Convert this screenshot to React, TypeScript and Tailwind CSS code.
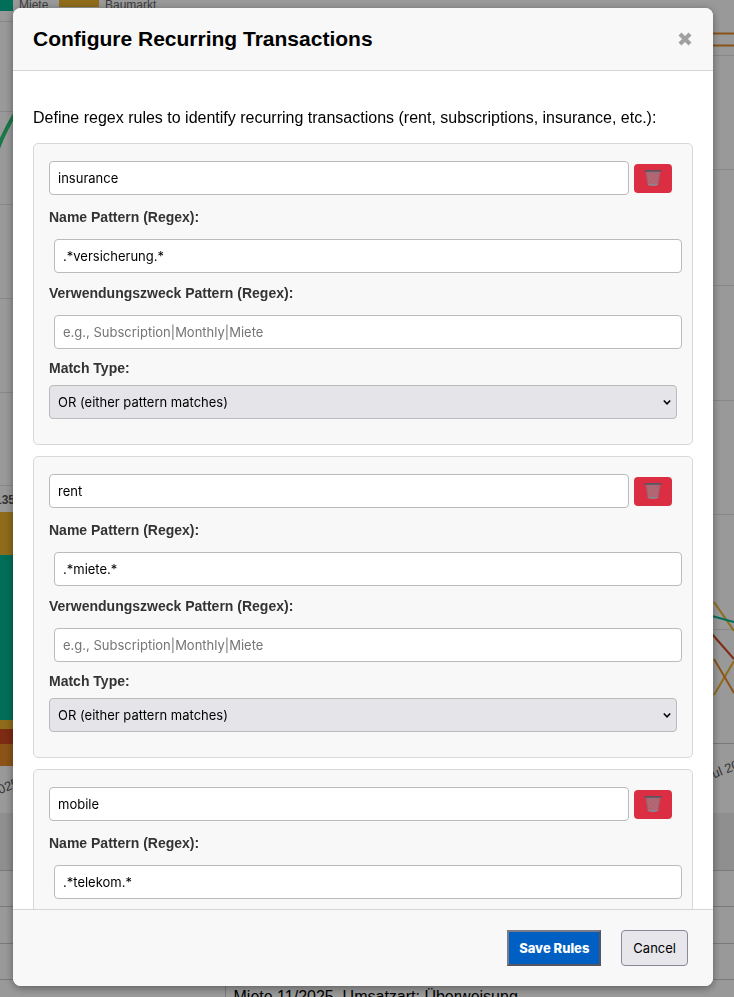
import { useState } from 'react'
import { clsx } from 'clsx'

type Rule = {
  id: number
  name: string
  namePattern: string
  purposePattern: string
  matchType: 'or' | 'and'
}

const initialRules: Rule[] = [
  { id: 1, name: 'insurance', namePattern: '.*versicherung.*', purposePattern: '', matchType: 'or' },
  { id: 2, name: 'rent', namePattern: '.*miete.*', purposePattern: '', matchType: 'or' },
  { id: 3, name: 'mobile', namePattern: '.*telekom.*', purposePattern: '', matchType: 'or' },
]

const fieldClass =
  'h-[34px] rounded border border-[#bbb] px-2 font-["Inter",sans-serif] text-[13px] text-black outline-none placeholder:text-[#757575]'

const labelClass = 'block text-[14px] leading-5 font-bold text-[#333]'

const TrashIcon = () => (
  <svg className="h-[18px] w-[18px]" viewBox="0 0 18 18" fill="none" aria-hidden="true">
    <path d="M1.6 2.2 3.8 15.4Q9 17.4 14.2 15.4L16.4 2.2Z" fill="#b8606c" />
    <path
      d="M3 5 12 15.8M5.5 3.5 14 13M9.5 3.5 14.8 9.5M3.5 9.5 9 16M15 5 6 15.8M12.5 3.5 4 13M8.5 3.5 3.2 9.5M14.5 9.5 9 16"
      stroke="#a3747e"
      strokeWidth="0.7"
    />
    <path d="M1.8 2.4 4 15.2M16.2 2.4 14 15.2" stroke="#96606d" strokeWidth="1" />
    <path d="M4 15.3Q9 17 14 15.3" stroke="#8d8490" strokeWidth="1.6" />
    <path d="M1.2 1.9H16.8" stroke="#5d5260" strokeWidth="1.8" strokeLinecap="round" />
    <path d="M2.5 3.3H15.5" stroke="#8b7480" strokeWidth="0.8" />
  </svg>
)

const CloseIcon = () => (
  <svg className="h-4 w-4" viewBox="0 0 16 16" fill="none" aria-hidden="true">
    <path d="M3 3 13 13M13 3 3 13" stroke="currentColor" strokeWidth="4.2" />
  </svg>
)

// Overview chart and booking table that sit behind the dialog
const Dashboard = () => (
  <div className="h-screen overflow-hidden bg-white">
    <div className="flex justify-between">
      <svg className="h-[813px] w-[240px]" fontFamily="Liberation Sans, sans-serif" aria-hidden="true">
        <path d="M0 21.5H240M0 111.5H240M0 204.5H240M0 298.5H240M0 392.5H240M0 485.5H240" stroke="#e3e3e3" />
        <rect width="13" height="11" fill="#00b894" />
        <rect x="59" width="40" height="7" fill="#edb42e" />
        <text x="19" y="9" fontSize="12" fill="#666">Miete</text>
        <text x="105" y="9" fontSize="12" fill="#666">Baumarkt</text>
        <path d="M-2 148Q5 130 16 112" stroke="#2bc778" strokeWidth="4" fill="none" />
        <text x="-5" y="504" fontSize="12" fontWeight="bold" fill="#555">135</text>
        <rect y="512" width="20" height="43" fill="#edb42e" />
        <rect y="555" width="20" height="165" fill="#00b894" />
        <rect y="720" width="20" height="9" fill="#edb42e" />
        <rect y="729" width="20" height="15" fill="#d04820" />
        <rect y="744" width="20" height="22" fill="#e98b28" />
        <text x="-7" y="797" fontSize="13" fill="#555" transform="rotate(-22 -7 797)">2025</text>
      </svg>
      <svg className="h-[813px] w-[60px]" fontFamily="Liberation Sans, sans-serif" aria-hidden="true">
        <path d="M0 55.5H60M0 169.5H60M0 285.5H60M0 400.5H60M0 514.5H60M0 629.5H60" stroke="#e3e3e3" />
        <path d="M0 743.5H60" stroke="#c8c8c8" />
        <path d="M0 33.5H60M0 45.5H60" stroke="#e98b28" strokeWidth="2" />
        <g strokeWidth="2" fill="none">
          <path d="M40 602 60 631M40 695 60 661" stroke="#edb42e" />
          <path d="M38 616 60 622" stroke="#00b894" />
          <path d="M38 634 60 659" stroke="#d04820" />
          <path d="M40 659 60 693" stroke="#e98b28" />
        </g>
        <text x="34" y="781" fontSize="13" fill="#555" transform="rotate(-22 34 781)">Jul 2025</text>
      </svg>
    </div>
    <table className="w-full table-fixed border-collapse text-base text-black">
      <thead>
        <tr className="h-[57px] border-b border-[#ccc] bg-[#eee]">
          <th className="w-[225px]" />
          <th />
        </tr>
      </thead>
      <tbody>
        <tr className="h-9 border-b border-[#ccc]"><td colSpan={2} /></tr>
        <tr className="h-[37px] border-b border-[#ccc]"><td colSpan={2} /></tr>
        <tr className="h-9 border-b border-[#ccc]"><td colSpan={2} /></tr>
        <tr className="h-9">
          <td />
          <td className="border-l border-[#ccc] px-2">Miete 11/2025, Umsatzart: Überweisung</td>
        </tr>
      </tbody>
    </table>
  </div>
)

type RuleCardProps = {
  rule: Rule
  onChange: (patch: Partial<Rule>) => void
  onRemove: () => void
}

const RuleCard = ({ rule, onChange, onRemove }: RuleCardProps) => (
  <div className="rounded-[5px] border border-[#d8d8d8] bg-[#f8f8f8] px-[15px] pt-[17px] pb-[25px]">
    <div className="flex items-center gap-[5px] pr-[5px]">
      <input
        type="text"
        aria-label="Rule name"
        className={clsx(fieldClass, 'min-w-0 flex-1 bg-white')}
        value={rule.name}
        onChange={(e) => onChange({ name: e.target.value })}
      />
      <button
        type="button"
        aria-label="Delete rule"
        className="flex h-[29px] w-[38px] items-center justify-center rounded bg-[#dc2e42]"
        onClick={onRemove}
      >
        <TrashIcon />
      </button>
    </div>

    <label htmlFor={`name-${rule.id}`} className={clsx(labelClass, 'mt-3')}>
      Name Pattern (Regex):
    </label>
    <div className="mt-3 -mr-[5px] pl-[5px]">
      <input
        id={`name-${rule.id}`}
        type="text"
        className={clsx(fieldClass, 'block w-full bg-white')}
        value={rule.namePattern}
        onChange={(e) => onChange({ namePattern: e.target.value })}
      />
    </div>

    <label htmlFor={`purpose-${rule.id}`} className={clsx(labelClass, 'mt-[10px]')}>
      Verwendungszweck Pattern (Regex):
    </label>
    <div className="mt-3 -mr-[5px] pl-[5px]">
      <input
        id={`purpose-${rule.id}`}
        type="text"
        placeholder="e.g., Subscription|Monthly|Miete"
        className={clsx(fieldClass, 'block w-full bg-white')}
        value={rule.purposePattern}
        onChange={(e) => onChange({ purposePattern: e.target.value })}
      />
    </div>

    <label htmlFor={`match-${rule.id}`} className={clsx(labelClass, 'mt-[9px]')}>
      Match Type:
    </label>
    <div className="mt-[7px] grid">
      <select
        id={`match-${rule.id}`}
        className={clsx(fieldClass, 'col-start-1 row-start-1 w-full appearance-none bg-[#e5e4e9] pt-[2px]')}
        value={rule.matchType}
        onChange={(e) => onChange({ matchType: e.target.value as Rule['matchType'] })}
      >
        <option value="or">OR (either pattern matches)</option>
        <option value="and">AND (both patterns match)</option>
      </select>
      <svg
        className="pointer-events-none col-start-1 row-start-1 mr-[6px] h-2 w-2 self-center justify-self-end"
        viewBox="0 0 8 8"
        fill="none"
        aria-hidden="true"
      >
        <path d="M0.8 2.4 4 5.8 7.2 2.4" stroke="#000" strokeWidth="1.5" />
      </svg>
    </div>
  </div>
)

export default function App() {
  const [rules, setRules] = useState(initialRules)

  const updateRule = (id: number, patch: Partial<Rule>) =>
    setRules((prev) => prev.map((rule) => (rule.id === id ? { ...rule, ...patch } : rule)))

  return (
    <div className='font-["Liberation_Sans",Arial,sans-serif]'>
      <Dashboard />
      <div className="fixed inset-0 flex justify-center bg-black/40 pt-2 pr-[21px] pb-[11px] pl-[13px]">
        <div
          role="dialog"
          aria-labelledby="dialog-title"
          className="flex w-full max-w-[700px] flex-col overflow-hidden rounded-lg bg-white shadow-[0_2px_8px_rgba(0,0,0,0.4)]"
        >
          <header className="flex items-center justify-between border-b border-[#d5d5d5] bg-[#f8f8f8] px-5 py-4">
            <h2 id="dialog-title" className="text-[21px] leading-[30px] font-bold text-black">
              Configure Recurring Transactions
            </h2>
            <button type="button" aria-label="Close" className="text-[#a0a0a0]">
              <CloseIcon />
            </button>
          </header>

          <div className="min-h-0 flex-1 overflow-y-auto px-5 pt-9 pb-5 [scrollbar-width:none]">
            <p className="text-base leading-[22px] text-black">
              Define regex rules to identify recurring transactions (rent, subscriptions, insurance, etc.):
            </p>
            <div className="mt-[14px] flex flex-col gap-[11px]">
              {rules.map((rule) => (
                <RuleCard
                  key={rule.id}
                  rule={rule}
                  onChange={(patch) => updateRule(rule.id, patch)}
                  onRemove={() => setRules((prev) => prev.filter((r) => r.id !== rule.id))}
                />
              ))}
            </div>
          </div>

          <footer className='flex justify-end gap-5 border-t border-[#d5d5d5] bg-[#f8f8f8] py-5 pr-[25px] pl-5 font-["Inter",sans-serif] text-[13px]'>
            <button
              type="button"
              className="h-9 border-2 border-t-[#7b7b88] border-r-[#55555f] border-b-[#55555f] border-l-[#7b7b88] bg-[#005fc2] px-[10px] pt-px font-extrabold text-white"
            >
              Save Rules
            </button>
            <button
              type="button"
              className="h-9 rounded border border-[#8a8999] bg-[#e7e6eb] px-[11px] pt-px text-black"
            >
              Cancel
            </button>
          </footer>
        </div>
      </div>
    </div>
  )
}
